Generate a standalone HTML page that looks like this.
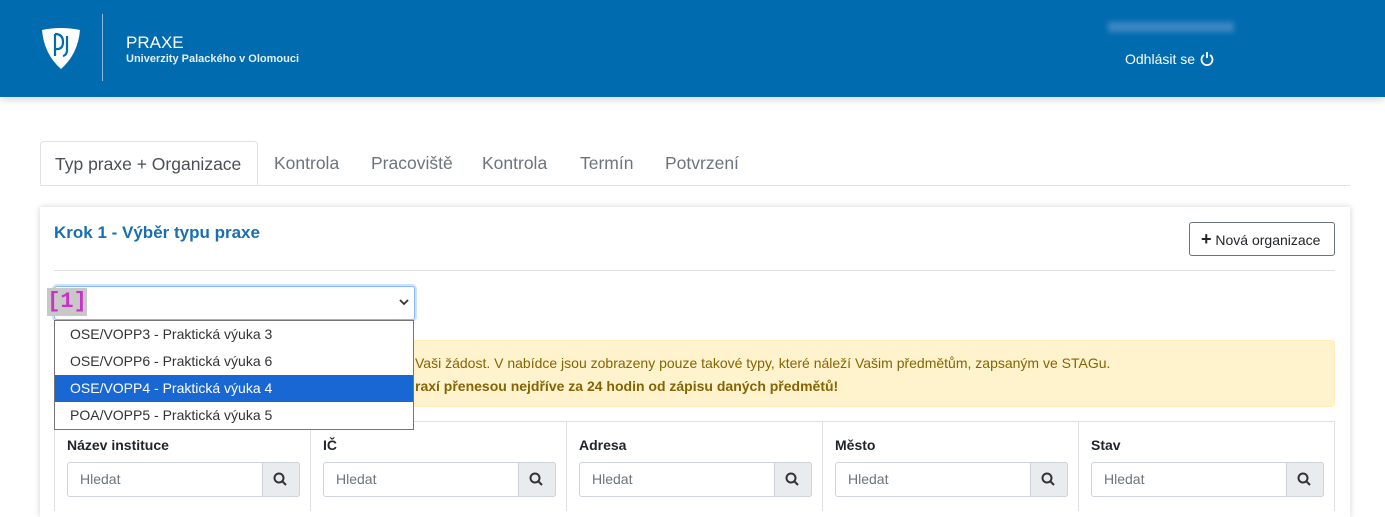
<!DOCTYPE html>
<html><head><meta charset="utf-8"><style>
*{box-sizing:border-box;margin:0;padding:0}
body{width:1385px;height:503px;overflow:hidden;background:#fff;font-family:"Liberation Sans",sans-serif;color:#212529;position:relative}
.hdr{position:absolute;left:0;top:0;width:1385px;height:97px;background:#006bae;box-shadow:0 3px 8px rgba(0,0,0,.15)}
.abs{position:absolute}
.tab{position:absolute;top:141px;height:44px;font-size:17.5px;color:#6c757d;line-height:44px}
.card{position:absolute;left:40px;top:207px;width:1310px;height:310px;background:#fff;box-shadow:0 0 6px rgba(0,0,0,.18)}
.col{position:absolute;top:421px;height:90px;border-left:1px solid #dee2e6;border-top:1px solid #dee2e6}
.col b{position:absolute;left:12px;top:15px;font-size:14px}
.inp{position:absolute;left:12px;top:40px;width:233px;height:35px;border:1px solid #ced4da;border-radius:3px;font-size:14px;color:#6c757d;line-height:33px;padding-left:12px}
.btn{position:absolute;right:-1px;top:-1px;width:38px;height:35px;background:#e9ecef;border:1px solid #ced4da;border-radius:0 3px 3px 0}
.opt{height:27px;line-height:27px;padding-left:15px;font-size:14px;color:#333}
</style></head><body>
<div class="hdr">
<svg class="abs" style="left:40px;top:26px" width="42" height="44" viewBox="0 0 42 44"><path d="M2 4 Q21 0 40 4 Q38 28 21 43 Q4 28 2 4Z" fill="#fff"/><path d="M15 8v22M15 8q8 0 8 8t-8 7M27 10v14q0 5-4 6" stroke="#006bae" stroke-width="2.2" fill="none"/></svg>
<div class="abs" style="left:102px;top:14px;width:1px;height:67px;background:#8db8da"></div>
<div class="abs" style="left:126px;top:33px;color:#fff;font-size:17px">PRAXE</div>
<div class="abs" style="left:126px;top:53px;color:#e6eef6;font-size:11px;font-weight:bold">Univerzity Palackého v Olomouci</div>
<div class="abs" style="left:1108px;top:22px;width:126px;height:10px;background:#4f8fc8;filter:blur(3px);opacity:.8"></div>
<div class="abs" style="left:1125px;top:51px;color:#fff;font-size:14px">Odhlásit se</div>
<svg class="abs" style="left:1200px;top:51px" width="14" height="15" viewBox="0 0 14 15"><path d="M4 4A5.5 5.5 0 1 0 10 4" stroke="#fff" stroke-width="1.8" fill="none"/><path d="M7 1v6" stroke="#fff" stroke-width="1.8"/></svg>
</div>
<div class="abs" style="left:40px;top:185px;width:1310px;height:1px;background:#dee2e6"></div>
<div class="tab" style="left:40px;width:218px;border:1px solid #dee2e6;border-bottom:1px solid #fff;border-radius:4px 4px 0 0;background:#fff;color:#495057;padding-left:14px">Typ praxe + Organizace</div>
<div class="tab" style="left:274px">Kontrola</div>
<div class="tab" style="left:371px">Pracoviště</div>
<div class="tab" style="left:482px">Kontrola</div>
<div class="tab" style="left:580px">Termín</div>
<div class="tab" style="left:665px">Potvrzení</div>
<div class="card"></div>
<div class="abs" style="left:54px;top:223px;font-size:17px;color:#1a6fb0;font-weight:bold">Krok 1 - Výběr typu praxe</div>
<div class="abs" style="left:1189px;top:222px;width:146px;height:34px;border:1px solid #6c757d;border-radius:3px;font-size:14px;line-height:32px;padding-left:11px;color:#212529"><span style="font-size:18px;font-weight:bold">+</span> Nová organizace</div>
<div class="abs" style="left:54px;top:270px;width:1281px;height:1px;background:#dee2e6"></div>
<div class="abs" style="left:54px;top:286px;width:361px;height:34px;border:1px solid #86b7fe;border-radius:3px;box-shadow:0 0 0 2px #cfe2ff"></div>
<svg class="abs" style="left:399px;top:298px" width="10" height="8" viewBox="0 0 10 8"><path d="M1 2l4 4 4-4" stroke="#333" stroke-width="1.8" fill="none"/></svg>
<div class="abs" style="left:47px;top:288px;width:40px;height:28px;background:#c8c8c8;color:#c832c8;font-weight:bold;font-size:22px;line-height:28px;text-align:center;font-family:'Liberation Mono',monospace">[1]</div>
<div class="abs" style="left:54px;top:340px;width:1281px;height:67px;background:#fff3cd;border:1px solid #ffeeba;border-radius:3px;color:#856404;font-size:14px">
<div class="abs" style="left:360px;top:14px;white-space:nowrap">Vaši žádost. V nabídce jsou zobrazeny pouze takové typy, které náleží Vašim předmětům, zapsaným ve STAGu.</div>
<div class="abs" style="left:360px;top:37px;white-space:nowrap;font-weight:bold">raxí přenesou nejdříve za 24 hodin od zápisu daných předmětů!</div>
</div>
<div class="abs" style="left:54px;top:421px;width:1281px;height:1px;background:#dee2e6"></div>
<div class="col" style="left:54px;width:256px"><b>Název instituce</b><div class="inp">Hledat<div class="btn"></div></div></div>
<div class="col" style="left:310px;width:256px"><b>IČ</b><div class="inp">Hledat<div class="btn"></div></div></div>
<div class="col" style="left:566px;width:256px"><b>Adresa</b><div class="inp">Hledat<div class="btn"></div></div></div>
<div class="col" style="left:822px;width:256px"><b>Město</b><div class="inp">Hledat<div class="btn"></div></div></div>
<div class="col" style="left:1078px;width:257px;border-right:1px solid #dee2e6"><b>Stav</b><div class="inp">Hledat<div class="btn"></div></div></div>
<svg width="0" height="0"><defs><g id="q"><circle cx="6" cy="6" r="4.5" stroke="#333" stroke-width="2" fill="none"/><path d="M9.5 9.5l3.5 3.5" stroke="#333" stroke-width="2"/></g></defs></svg>
<svg class="abs" style="left:273px;top:472px" width="15" height="15"><use href="#q"/></svg>
<svg class="abs" style="left:529px;top:472px" width="15" height="15"><use href="#q"/></svg>
<svg class="abs" style="left:785px;top:472px" width="15" height="15"><use href="#q"/></svg>
<svg class="abs" style="left:1041px;top:472px" width="15" height="15"><use href="#q"/></svg>
<svg class="abs" style="left:1297px;top:472px" width="15" height="15"><use href="#q"/></svg>
<div class="abs" style="left:54px;top:320px;width:360px;height:110px;background:#fff;border:1px solid #767676">
<div class="opt">OSE/VOPP3 - Praktická výuka 3</div>
<div class="opt">OSE/VOPP6 - Praktická výuka 6</div>
<div class="opt" style="background:#1967d2;color:#fff">OSE/VOPP4 - Praktická výuka 4</div>
<div class="opt">POA/VOPP5 - Praktická výuka 5</div>
</div>
</body></html>
